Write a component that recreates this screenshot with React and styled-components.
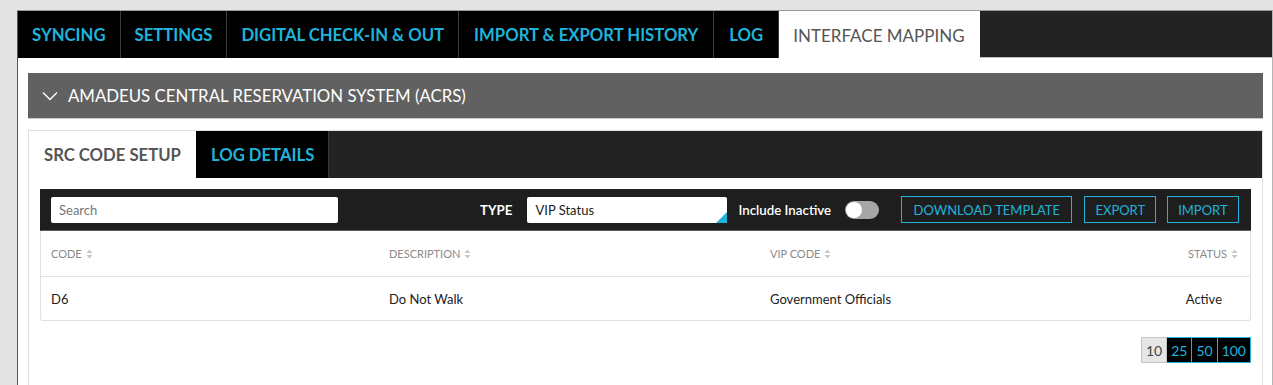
import React, { useState } from 'react';
import styled, { createGlobalStyle } from 'styled-components';

const GlobalStyle = createGlobalStyle`
  html, body {
    margin: 0;
    padding: 0;
    background: #e4e4e4;
    font-family: Lato, "Open Sans", "Liberation Sans", sans-serif;
  }
  * { box-sizing: border-box; }
`;

const Page = styled.div`
  padding: 10px 0 0 17px;
  height: 385px;
  overflow: hidden;
`;

const Frame = styled.div`
  background: #fff;
  border-top: 1px solid #9a9a9a;
  border-left: 1px solid #555;
  border-right: 1px solid #b5b5b5;
  height: 100%;
`;

const TabBar = styled.div`
  display: flex;
  background: #232323;
  height: 47px;
  border-bottom: 1px solid #bdbdbd;
`;

const Tab = styled.div`
  display: flex;
  align-items: center;
  padding: 0 ${({ pad }) => pad || 14}px;
  background: ${({ active }) => (active ? '#fff' : '#000')};
  color: ${({ active }) => (active ? '#555' : '#1fb3db')};
  border-right: 1px solid ${({ active }) => (active ? '#fff' : '#3a3a3a')};
  font-size: ${({ active }) => (active ? 17 : 16.7)}px;
  font-weight: ${({ active }) => (active ? 400 : 700)};
  white-space: nowrap;
  height: ${({ active }) => (active ? '48px' : '47px')};
`;

const Content = styled.div`
  padding: 15px 9px 0 10px;
`;

const Accordion = styled.div`
  display: flex;
  align-items: center;
  gap: 10px;
  height: 46px;
  padding: 0 14px;
  background: #616161;
  color: #fff;
  font-size: 16.8px;
  border-bottom: 1px solid #c9c9c9;
`;

const Panel = styled.div`
  margin-top: 11px;
  border: 1px solid #e0e0e0;
  border-bottom: none;
  height: 260px;
`;

const SubTabBar = styled.div`
  display: flex;
  background: #232323;
  height: 47px;
`;

const SubTab = styled.div`
  display: flex;
  align-items: center;
  padding: 0 14px 0 15px;
  background: ${({ active }) => (active ? '#fff' : '#000')};
  color: ${({ active }) => (active ? '#555' : '#1fb3db')};
  border-right: 1px solid ${({ active }) => (active ? '#fff' : '#3a3a3a')};
  font-size: 16.7px;
  font-weight: 700;
  white-space: nowrap;
  height: ${({ active }) => (active ? '48px' : '47px')};
`;

const PanelBody = styled.div`
  padding: 11px 11px 0 11px;
`;

const Toolbar = styled.div`
  display: flex;
  align-items: center;
  height: 42px;
  background: #1e1e1e;
  padding: 0 10px 0 11px;
  border-bottom: 1px solid #5a5a5a;
`;

const Search = styled.input`
  width: 287px;
  height: 26px;
  border: none;
  border-radius: 2px;
  padding: 0 8px;
  font-family: inherit;
  font-size: 13px;
  color: #333;
  outline: none;
  &::placeholder { color: #777; }
`;

const Label = styled.span`
  color: #fff;
  font-size: 13.3px;
  font-weight: ${({ bold }) => (bold ? 700 : 600)};
  margin-left: ${({ ml }) => ml || 0}px;
  white-space: nowrap;
`;

const Select = styled.div`
  position: relative;
  width: 200px;
  height: 26px;
  margin-left: 15px;
  background: #fff;
  border-radius: 2px;
  padding: 0 8px;
  display: flex;
  align-items: center;
  font-size: 13px;
  color: #222;
  &::after {
    content: '';
    position: absolute;
    right: 0;
    bottom: 0;
    width: 0;
    height: 0;
    border-left: 11px solid transparent;
    border-bottom: 11px solid #1fb3db;
  }
`;

const Toggle = styled.div`
  position: relative;
  width: 34px;
  height: 18px;
  margin-left: 14px;
  border-radius: 9px;
  background: #a6a6a6;
  &::before {
    content: '';
    position: absolute;
    left: 1px;
    top: 1px;
    width: 16px;
    height: 16px;
    border-radius: 50%;
    background: #fff;
  }
`;

const OutlineButton = styled.button`
  height: 27px;
  margin-left: ${({ ml }) => ml || 11}px;
  padding: 0 ${({ pad }) => pad || 11}px;
  background: transparent;
  border: 1px solid #1fb3db;
  color: #1fb3db;
  font-family: inherit;
  font-size: 13px;
  white-space: nowrap;
  cursor: pointer;
`;

const Table = styled.div`
  border: 1px solid #e0e0e0;
  border-top: none;
  border-radius: 0 0 3px 3px;
`;

const Row = styled.div`
  display: grid;
  grid-template-columns: 338px 381px 1fr 140px;
  align-items: center;
  height: ${({ head }) => (head ? 45 : 44)}px;
  padding: 0 12px 0 10px;
  border-top: ${({ head }) => (head ? 'none' : '1px solid #e2e2e2')};
`;

const HeadCell = styled.div`
  display: flex;
  align-items: center;
  justify-content: ${({ right }) => (right ? 'flex-end' : 'flex-start')};
  gap: 4px;
  color: #8a8a8a;
  font-size: 11px;
  text-transform: uppercase;
`;

const Cell = styled.div`
  color: #222;
  font-size: 13px;
  text-align: ${({ right }) => (right ? 'right' : 'left')};
  padding-right: ${({ right }) => (right ? 16 : 0)}px;
`;

const Pager = styled.div`
  display: flex;
  justify-content: flex-end;
  margin-top: 16px;
`;

const PageBtn = styled.div`
  height: 26px;
  padding: 0 4px;
  display: flex;
  align-items: center;
  font-size: 14px;
  background: ${({ active }) => (active ? '#e6e6e6' : '#000')};
  color: ${({ active }) => (active ? '#444' : '#1fb3db')};
  border: 1px solid ${({ active }) => (active ? '#c4c4c4' : '#1fb3db')};
  border-left-width: ${({ first }) => (first ? 1 : 0)}px;
`;

const SortIcon = () => (
  <svg width="7" height="10" viewBox="0 0 7 10">
    <path d="M3.5 0.5 L6.5 4 L0.5 4 Z" fill="#c8c8c8" />
    <path d="M3.5 9.5 L6.5 6 L0.5 6 Z" fill="#c8c8c8" />
  </svg>
);

const Chevron = () => (
  <svg width="16" height="10" viewBox="0 0 16 10">
    <path d="M1 1.5 L8 8.5 L15 1.5" fill="none" stroke="#fff" strokeWidth="1.4" />
  </svg>
);

const topTabs = [
  { label: 'SYNCING' },
  { label: 'SETTINGS' },
  { label: 'DIGITAL CHECK-IN & OUT' },
  { label: 'IMPORT & EXPORT HISTORY', pad: 15 },
  { label: 'LOG', pad: 15 },
  { label: 'INTERFACE MAPPING', active: true },
];

const rows = [
  { code: 'D6', description: 'Do Not Walk', vip: 'Government Officials', status: 'Active' },
];

export default function App() {
  const [search, setSearch] = useState('');
  return (
    <>
      <GlobalStyle />
      <Page>
        <Frame>
          <TabBar>
            {topTabs.map((t) => (
              <Tab key={t.label} active={t.active} pad={t.pad}>{t.label}</Tab>
            ))}
          </TabBar>
          <Content>
            <Accordion>
              <Chevron />
              <span>AMADEUS CENTRAL RESERVATION SYSTEM (ACRS)</span>
            </Accordion>
            <Panel>
              <SubTabBar>
                <SubTab active>SRC CODE SETUP</SubTab>
                <SubTab>LOG DETAILS</SubTab>
              </SubTabBar>
              <PanelBody>
                <Toolbar>
                  <Search placeholder="Search" value={search} onChange={(e) => setSearch(e.target.value)} />
                  <Label bold ml={142}>TYPE</Label>
                  <Select>VIP Status</Select>
                  <Label ml={11}>Include Inactive</Label>
                  <Toggle />
                  <OutlineButton ml={22} pad={11.5}>DOWNLOAD TEMPLATE</OutlineButton>
                  <OutlineButton pad={10} ml={12}>EXPORT</OutlineButton>
                  <OutlineButton pad={10} ml={11}>IMPORT</OutlineButton>
                </Toolbar>
                <Table>
                  <Row head>
                    <HeadCell>Code <SortIcon /></HeadCell>
                    <HeadCell>Description <SortIcon /></HeadCell>
                    <HeadCell>VIP Code <SortIcon /></HeadCell>
                    <HeadCell right>Status <SortIcon /></HeadCell>
                  </Row>
                  {rows.map((r) => (
                    <Row key={r.code}>
                      <Cell>{r.code}</Cell>
                      <Cell>{r.description}</Cell>
                      <Cell>{r.vip}</Cell>
                      <Cell right>{r.status}</Cell>
                    </Row>
                  ))}
                </Table>
                <Pager>
                  <PageBtn active first>10</PageBtn>
                  <PageBtn>25</PageBtn>
                  <PageBtn>50</PageBtn>
                  <PageBtn>100</PageBtn>
                </Pager>
              </PanelBody>
            </Panel>
          </Content>
        </Frame>
      </Page>
    </>
  );
}
